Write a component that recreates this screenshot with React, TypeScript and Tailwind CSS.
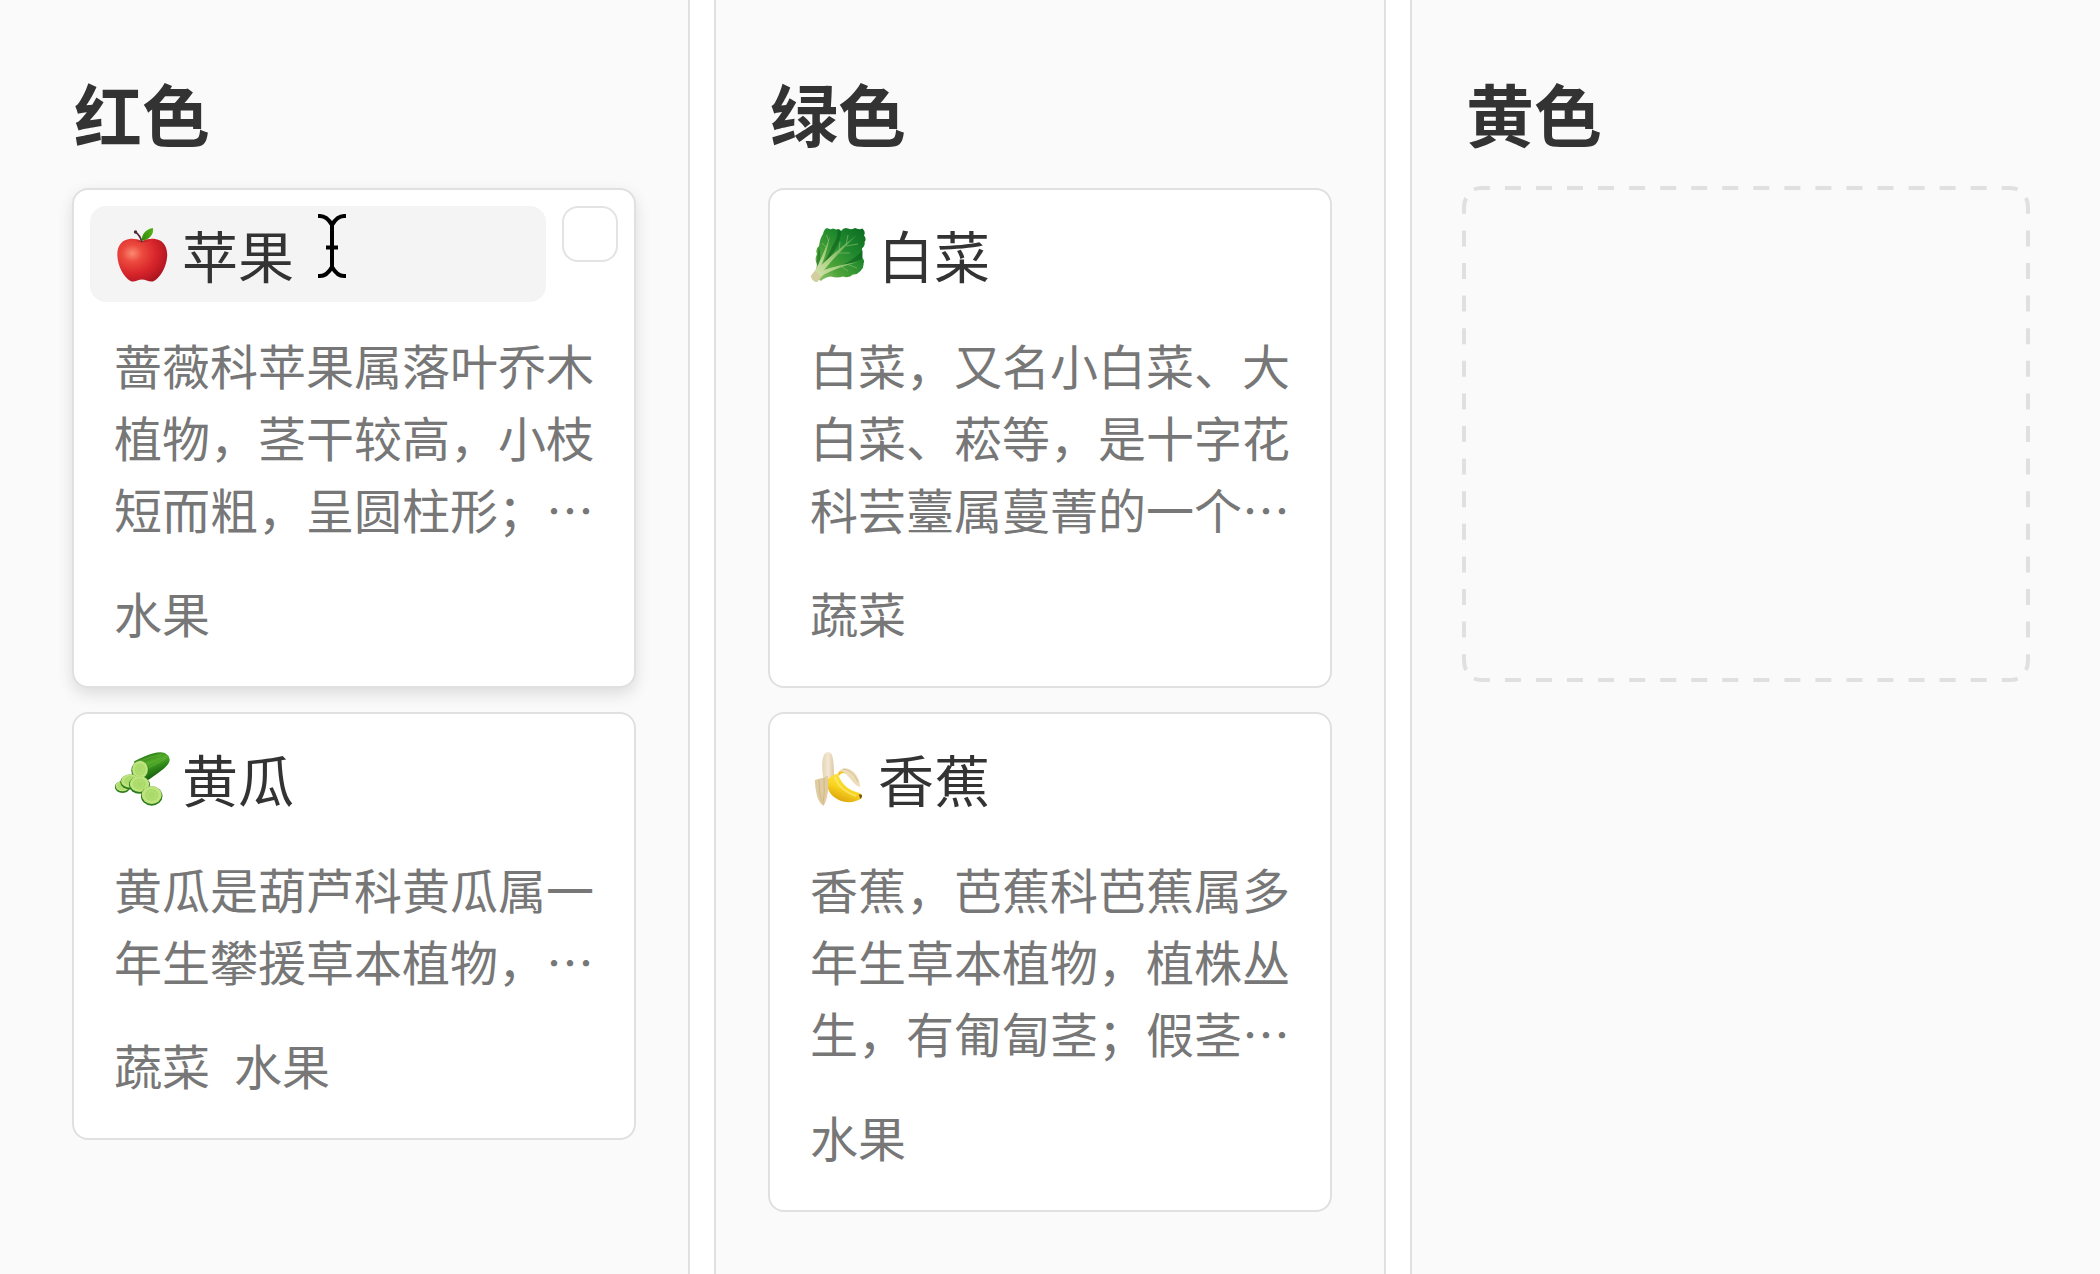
import React, { ReactNode, useState } from "react";

type TItem = {
  id: string;
  title: string;
  icon: ReactNode;
  description: string;
  tags: string[];
  isActive?: boolean;
};

type TColumn = {
  id: string;
  name: string;
  className: string;
  items: TItem[];
};

function AppleIcon() {
  return (
    <svg viewBox="0 0 56 56" className="size-14 shrink-0" aria-hidden="true">
      <defs>
        <radialGradient id="apple-skin" cx="0.3" cy="0.34" r="0.8">
          <stop offset="0" stopColor="#fb8a72" />
          <stop offset="0.25" stopColor="#ec4a3e" />
          <stop offset="0.6" stopColor="#d8252b" />
          <stop offset="1" stopColor="#a5121e" />
        </radialGradient>
        <linearGradient id="apple-leaf" x1="0" y1="1" x2="1" y2="0">
          <stop offset="0" stopColor="#2f8a08" />
          <stop offset="1" stopColor="#5cb81c" />
        </linearGradient>
      </defs>
      <path
        d="M28 15C22 12.2 15.5 12.2 10.5 14.5C5 17.2 3 23.5 3.4 30C3.8 40 9.5 51 16.5 55C20 56.8 24 53.6 28 53.6C32 53.6 36 56.8 40 55C47 51 52.7 40 53.2 30C53.5 23.5 51 17 46 14.5C41 12.2 34 12.2 28 15Z"
        fill="url(#apple-skin)"
      />
      <path d="M21 14.6Q28 18 36 14.6Q31 14.4 28 15.6Q24 14.4 21 14.6Z" fill="#9c1219" opacity="0.5" />
      <path d="M21.5 6Q26 9.5 27.8 15.5" fill="none" stroke="#55303a" strokeWidth="1.7" strokeLinecap="round" />
      <circle cx="21.5" cy="6" r="1.7" fill="#4d2b35" />
      <path d="M27.8 14.8C27.5 8 32 3 39 2C40 8 35.5 14 27.8 14.8Z" fill="url(#apple-leaf)" />
      <path d="M28.5 14Q32 8 37.5 3.5" fill="none" stroke="#338a0d" strokeWidth="0.6" />
    </svg>
  );
}

function CucumberSlice({ cx, cy, rx, ry }: { cx: number; cy: number; rx: number; ry: number }) {
  return (
    <g>
      <ellipse cx={cx} cy={cy + 1} rx={rx} ry={ry} fill="#2c7a1a" />
      <ellipse cx={cx} cy={cy} rx={rx - 0.8} ry={ry - 0.8} fill="#bde47f" />
      <ellipse cx={cx} cy={cy} rx={rx * 0.62} ry={ry * 0.62} fill="#aadb68" />
      <ellipse
        cx={cx}
        cy={cy}
        rx={rx * 0.38}
        ry={ry * 0.38}
        fill="none"
        stroke="#bce584"
        strokeWidth="1"
        strokeDasharray="1.5 1"
      />
    </g>
  );
}

function CucumberIcon() {
  return (
    <svg viewBox="0 0 56 56" className="size-14 shrink-0" aria-hidden="true">
      <defs>
        <linearGradient id="cucumber-skin" x1="0.3" y1="0.1" x2="0.7" y2="0.9">
          <stop offset="0" stopColor="#2a7d15" />
          <stop offset="0.35" stopColor="#57ae2c" />
          <stop offset="0.6" stopColor="#2f8a19" />
          <stop offset="1" stopColor="#14560a" />
        </linearGradient>
      </defs>
      <path
        d="M20 11.5C27 7.5 38 2.6 46 2.2C52 2 56.5 6 55.5 11C54 17 44 23 35 29.5C32 31 27 30 24 27Z"
        fill="url(#cucumber-skin)"
      />
      <path d="M25 11.5Q37 6 48 4.5M34 18Q44 13 52 8" fill="none" stroke="#7cc24d" strokeWidth="0.7" opacity="0.6" />
      <CucumberSlice cx={26} cy={19.5} rx={8.7} ry={9.5} />
      <CucumberSlice cx={8.5} cy={36} rx={7.7} ry={6} />
      <CucumberSlice cx={16.5} cy={31} rx={10.3} ry={7.5} />
      <CucumberSlice cx={25.5} cy={34} rx={10.5} ry={8.7} />
      <CucumberSlice cx={37.7} cy={45} rx={10.8} ry={9.7} />
    </svg>
  );
}

function CabbageIcon() {
  return (
    <svg viewBox="0 0 56 56" className="size-14 shrink-0" aria-hidden="true">
      <defs>
        <linearGradient id="cabbage-leaf" x1="0" y1="1" x2="1" y2="0">
          <stop offset="0" stopColor="#a5cc7c" />
          <stop offset="0.3" stopColor="#4fa53a" />
          <stop offset="0.65" stopColor="#1f882d" />
          <stop offset="1" stopColor="#0b6a22" />
        </linearGradient>
        <linearGradient id="cabbage-rib" x1="0" y1="1" x2="0.9" y2="0.1">
          <stop offset="0" stopColor="#e4e8bc" />
          <stop offset="0.4" stopColor="#b5d68c" />
          <stop offset="1" stopColor="#4fa14a" />
        </linearGradient>
      </defs>
      <path
        d="M17 2Q20 4 23 2.5Q27 4 29 3L31 5Q34 1 38 2.5Q42 4 45 2Q49 4 52.5 2.5Q56 6 54 9.5Q57 13 54.5 16Q55.5 20 52 22.5L52.5 32Q55 35 53.5 37.5Q54 42 50.5 45Q47 49 43 48.5Q39 52.5 33 50.5Q27 52.5 21 50.5Q15 51 11 55L3.5 50Q8 43 6.5 37Q4.5 33 7 28Q5 23 9 20Q10 12 13 8Q14 3 17 2Z"
        fill="url(#cabbage-leaf)"
      />
      <path d="M27 3Q29 10 23 19Q18 30 13 38Q20 32 25 24Q31 14 31 5Z" fill="#0a5a1b" opacity="0.55" />
      <path d="M53 24Q45 33 32 39Q43 37 52 33Z" fill="#07521a" opacity="0.45" />
      <path d="M9 21Q12 31 8 41L5 46Q8 40 6.5 36Z" fill="#0b5b1b" opacity="0.5" />
      <path
        d="M0.8 50Q6 44 8.500 38Q15 24 20 10Q17 26 11.5 39Q28 23 47 9Q29 26 14 44Q28 39 48 36Q29 41 14 48.500Q10 51 7 56.5Q2 55 0.8 50Z"
        fill="url(#cabbage-rib)"
      />
      <path
        d="M16 21L12 17M18.5 15L16.500 9M29 25L30 16M36 19L38 9M27 27L40 27M36 20L48 18M30 40L38 45M38 38.500L47 42"
        fill="none"
        stroke="#7fbd68"
        strokeWidth="0.7"
      />
      <path d="M0.8 50Q4 46 6 45L11 51L7 56.5Q2 55 0.8 50Z" fill="#d3cd9f" />
    </svg>
  );
}

function BananaIcon() {
  return (
    <svg viewBox="0 0 56 56" className="size-14 shrink-0" aria-hidden="true">
      <defs>
        <linearGradient id="banana-skin" x1="0.8" y1="0" x2="0.3" y2="1">
          <stop offset="0" stopColor="#ffe95a" />
          <stop offset="0.55" stopColor="#f9d51f" />
          <stop offset="1" stopColor="#d99e0b" />
        </linearGradient>
        <linearGradient id="banana-flesh" x1="0" y1="0" x2="1" y2="0">
          <stop offset="0" stopColor="#e3d3b4" />
          <stop offset="0.5" stopColor="#f3e8d2" />
          <stop offset="1" stopColor="#dcc8a6" />
        </linearGradient>
      </defs>
      <path d="M13 27C12 19 11.5 9 14.5 4Q18 -0.2 21.5 4C24 10 24 20 24 28Z" fill="url(#banana-flesh)" />
      <path
        d="M17 30Q21 25 28 23.5C30 31 35 37 42 40.5L50.5 43.5Q53 46 50.5 49C44 53 35 53.5 27 49C19.5 45 16.5 38 17 30Z"
        fill="url(#banana-skin)"
      />
      <path d="M25 27Q29 40 46 46" fill="none" stroke="#fff08a" strokeWidth="1.8" opacity="0.6" />
      <path d="M48.5 44.5L51.5 44.5Q53 46.5 50.5 49Z" fill="#7a561c" />
      <path
        d="M28 23Q31 17.5 37 18.5C45 20 50 29 50 37C45 36 41 29 36 24Q32 21 28 23Z"
        fill="#ecdcb8"
      />
      <path d="M33 19Q43 20 48 32" fill="none" stroke="#d3bd8b" strokeWidth="0.9" />
      <path d="M28 23Q31 20 35.5 23.5Q31 22 29 26Z" fill="#f2c21b" />
      <path d="M4.8 30Q11 29 18 25.5C19 37 18 49 13.5 56Q9 53 7 46Q5 38 4.8 30Z" fill="#e0cca2" />
      <path d="M14 28Q15 43 13 54M9 30Q9 42 11.5 51" fill="none" stroke="#cdb583" strokeWidth="0.9" />
    </svg>
  );
}

function TextCursor() {
  return (
    <svg
      viewBox="0 0 28 64"
      className="absolute left-[228px] top-2 h-16 w-7"
      fill="none"
      stroke="#000"
      strokeWidth="4"
      aria-hidden="true"
    >
      <path d="M0 2H2Q9 2 14 11Q19 2 26 2H28M0 62H2Q9 62 14 53Q19 62 26 62H28M14 9V55M8 33.5H20" />
    </svg>
  );
}

function DropZone() {
  return (
    <svg
      viewBox="0 0 568 496"
      className="-mx-0.5 -mt-0.5 block h-auto w-[calc(100%+4px)]"
      fill="none"
      stroke="#e0e0e0"
      strokeWidth="4"
      aria-hidden="true"
    >
      <g strokeDasharray="16 15.05">
        <path d="M12 3.5Q15 2 20 2H548Q553 2 556 3.5" />
        <path d="M12 492.5Q15 494 20 494H548Q553 494 556 492.5" />
      </g>
      <g strokeDasharray="16 16.6">
        <path d="M4 12Q2 16 2 22V474Q2 480 4 484" />
        <path d="M564 12Q566 16 566 22V474Q566 480 564 484" />
      </g>
    </svg>
  );
}

const columns: TColumn[] = [
  {
    id: "red",
    name: "红色",
    className: "border-r-2 pl-[72px] pr-[52px]",
    items: [
      {
        id: "apple",
        title: "苹果",
        icon: <AppleIcon />,
        description: "蔷薇科苹果属落叶乔木植物，茎干较高，小枝短而粗，呈圆柱形；…",
        tags: ["水果"],
        isActive: true,
      },
      {
        id: "cucumber",
        title: "黄瓜",
        icon: <CucumberIcon />,
        description: "黄瓜是葫芦科黄瓜属一年生攀援草本植物，…",
        tags: ["蔬菜", "水果"],
      },
    ],
  },
  {
    id: "green",
    name: "绿色",
    className: "border-x-2 px-[52px]",
    items: [
      {
        id: "cabbage",
        title: "白菜",
        icon: <CabbageIcon />,
        description: "白菜，又名小白菜、大白菜、菘等，是十字花科芸薹属蔓菁的一个…",
        tags: ["蔬菜"],
      },
      {
        id: "banana",
        title: "香蕉",
        icon: <BananaIcon />,
        description: "香蕉，芭蕉科芭蕉属多年生草本植物，植株丛生，有匍匐茎；假茎…",
        tags: ["水果"],
      },
    ],
  },
  {
    id: "yellow",
    name: "黄色",
    className: "border-l-2 pl-[52px] pr-[72px]",
    items: [],
  },
];

function Card({ item }: { item: TItem }) {
  const [checked, setChecked] = useState(false);

  return (
    <article
      className={
        item.isActive
          ? "rounded-2xl border-2 border-[#e0e0e0] bg-white p-4 shadow-[0_6px_16px_rgba(0,0,0,0.12)]"
          : "rounded-2xl border-2 border-[#e0e0e0] bg-white p-4"
      }
    >
      <div className="flex items-start gap-4">
        <div
          className={
            item.isActive
              ? "relative flex flex-1 items-center gap-3 rounded-2xl bg-[#f4f4f4] px-6 py-5"
              : "relative flex flex-1 items-center gap-3 px-6 py-5"
          }
        >
          {item.icon}
          <h3 className="text-[56px] leading-14 text-[#333]">{item.title}</h3>
          {item.isActive && <TextCursor />}
        </div>
        {item.isActive && (
          <input
            type="checkbox"
            aria-label={item.title}
            checked={checked}
            onChange={() => setChecked(!checked)}
            className="size-14 shrink-0 appearance-none rounded-2xl border-2 border-[#e3e3e3] bg-white checked:bg-[#e3e3e3]"
          />
        )}
      </div>
      <div className="px-6 pt-[26px] pb-[22px] text-5xl leading-[72px] text-[#777]">
        <p>{item.description}</p>
        <ul className="flex gap-6 pt-8">
          {item.tags.map((tag) => (
            <li key={tag}>{tag}</li>
          ))}
        </ul>
      </div>
    </article>
  );
}

function Column({ column }: { column: TColumn }) {
  return (
    <section className={`border-[#e0e0e0] bg-[#fafafa] pt-[77px] pb-12 ${column.className}`}>
      <h2 className="mb-[39px] px-0.5 text-[68px] leading-[72px] font-bold text-[#333]">{column.name}</h2>
      {column.items.length > 0 ? (
        <div className="flex flex-col gap-6">
          {column.items.map((item) => (
            <Card key={item.id} item={item} />
          ))}
        </div>
      ) : (
        <DropZone />
      )}
    </section>
  );
}

function App() {
  return (
    <main
      lang="zh-CN"
      className="grid min-h-screen grid-cols-[690fr_672fr_690fr] gap-6 bg-white font-['Noto_Sans_CJK_SC',sans-serif]"
    >
      {columns.map((column) => (
        <Column key={column.id} column={column} />
      ))}
    </main>
  );
}

export default App;
